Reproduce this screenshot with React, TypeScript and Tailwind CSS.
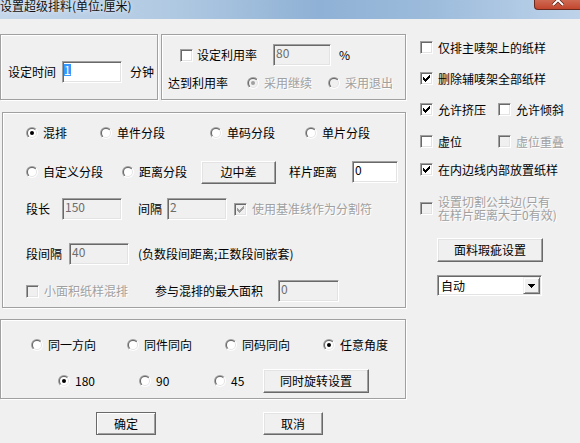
import React from "react";

const DIS = "text-[#a0a0a0] [text-shadow:1px_1px_0_#ffffff]";

function Radio({ checked = false, disabled = false }: { checked?: boolean; disabled?: boolean }) {
  return (
    <svg width="12" height="12" viewBox="0 0 12 12" className="shrink-0 block">
      <defs>
        <linearGradient id="rdo" x1="0" y1="0" x2="1" y2="1">
          <stop offset="0.5" stopColor="#a0a0a0" />
          <stop offset="0.5" stopColor="#ffffff" />
        </linearGradient>
        <linearGradient id="rdi" x1="0" y1="0" x2="1" y2="1">
          <stop offset="0.5" stopColor="#696969" />
          <stop offset="0.5" stopColor="#e3e3e3" />
        </linearGradient>
      </defs>
      <circle cx="6" cy="6" r="6" fill="url(#rdo)" />
      <circle cx="6" cy="6" r="5" fill="url(#rdi)" />
      <circle cx="6" cy="6" r="4" fill={disabled ? "#f0f0f0" : "#ffffff"} />
      {checked && <circle cx="6" cy="6" r="2" fill={disabled ? "#a0a0a0" : "#000000"} />}
    </svg>
  );
}

function Check({ checked = false, disabled = false }: { checked?: boolean; disabled?: boolean }) {
  return (
    <span
      className={`w-[13px] h-[13px] shrink-0 box-border border border-t-[#a0a0a0] border-l-[#a0a0a0] border-b-white border-r-white shadow-[inset_1px_1px_0_#696969,inset_-1px_-1px_0_#e3e3e3] flex items-center justify-center ${
        disabled ? "bg-[#f0f0f0]" : "bg-white"
      }`}
    >
      {checked && (
        <svg width="7" height="7" viewBox="0 0 7 7" className="block">
          <path
            d="M6 0h1v1h-1z M5 1h2v1h-2z M0 2h1v1h-1z M4 2h3v1h-3z M0 3h2v1h-2z M3 3h3v1h-3z M0 4h5v1h-5z M1 5h3v1h-3z M2 6h1v1h-1z"
            fill={disabled ? "#a0a0a0" : "#000000"}
          />
        </svg>
      )}
    </span>
  );
}

function Field({
  value,
  disabled = false,
  selected = false,
  className = "",
}: {
  value: string;
  disabled?: boolean;
  selected?: boolean;
  className?: string;
}) {
  return (
    <div
      className={`h-[22px] shrink-0 box-border border border-t-[#a0a0a0] border-l-[#a0a0a0] border-b-white border-r-white shadow-[inset_1px_1px_0_#696969,inset_-1px_-1px_0_#e3e3e3] flex items-start pt-[1px] pl-[2px] ${
        disabled ? "bg-[#f0f0f0] text-[#6d6d6d]" : "bg-white text-black"
      } ${className}`}
    >
      {selected ? (
        <span className="inline-block ml-[-1px] mt-[1px] h-[12px] leading-[12px] bg-[#3399ff] text-white">{value}</span>
      ) : (
        <span className="leading-[14px]">{value}</span>
      )}
    </div>
  );
}

function Btn({
  children,
  def = false,
  className = "",
}: {
  children: React.ReactNode;
  def?: boolean;
  className?: string;
}) {
  return (
    <div
      className={`shrink-0 box-border flex items-center justify-center bg-[#f0f0f0] border leading-[14px] ${
        def
          ? "border-[#696969] shadow-[inset_1px_1px_0_#ffffff,inset_-1px_-1px_0_#a0a0a0]"
          : "border-t-white border-l-white border-b-[#696969] border-r-[#696969] shadow-[inset_-1px_-1px_0_#a0a0a0,inset_1px_1px_0_#e3e3e3]"
      } ${className}`}
    >
      {children}
    </div>
  );
}

function RadioItem({
  label,
  checked = false,
  disabled = false,
  className = "",
}: {
  label: string;
  checked?: boolean;
  disabled?: boolean;
  className?: string;
}) {
  return (
    <div className={`flex items-center shrink-0 ${className}`}>
      <Radio checked={checked} disabled={disabled} />
      <span className={`ml-[5px] whitespace-nowrap ${disabled ? DIS : ""}`}>{label}</span>
    </div>
  );
}

function CheckItem({
  label,
  checked = false,
  disabled = false,
  className = "",
}: {
  label: string;
  checked?: boolean;
  disabled?: boolean;
  className?: string;
}) {
  return (
    <div className={`flex items-center shrink-0 ${className}`}>
      <Check checked={checked} disabled={disabled} />
      <span className={`ml-[5px] whitespace-nowrap ${disabled ? DIS : ""}`}>{label}</span>
    </div>
  );
}

function Group({ children, className = "" }: { children?: React.ReactNode; className?: string }) {
  return (
    <div
      className={`box-border shrink-0 border border-[#a0a0a0] shadow-[inset_1px_1px_0_#ffffff,1px_1px_0_#ffffff] flex flex-col ${className}`}
    >
      {children}
    </div>
  );
}

export default function App() {
  return (
    <div className="w-[580px] h-[443px] overflow-hidden bg-[#f0f0f0] text-[12px] leading-[14px] text-black font-['Noto_Sans_CJK_SC','Noto_Sans',sans-serif]">
      {/* title bar */}
      <div className="h-[19px] flex items-start overflow-hidden bg-[linear-gradient(90deg,#c4d6ea_0%,#b0c9e2_30%,#8fb1d5_55%,#9dbcdc_75%,#bed3ea_100%)]">
        <span className="mt-[-1px] whitespace-nowrap text-[12px] leading-[13px] text-[#111] [text-shadow:0_0_5px_rgba(255,255,255,0.9)]">
          设置超级排料(单位:厘米)
        </span>
        <div className="ml-auto relative w-[46px] h-[10px] box-border border-l border-b border-[#6b2a1e] rounded-bl-[4px] bg-[linear-gradient(180deg,#cf6a53_0%,#c2462e_100%)]">
          <svg width="14" height="6" viewBox="0 0 14 6" className="absolute left-[16px] top-0">
            <path d="M2 5 L7 0 L12 5" stroke="#5a2015" strokeWidth="3.4" fill="none" />
            <path d="M2 5 L7 0 L12 5" stroke="#ffffff" strokeWidth="2" fill="none" />
          </svg>
        </div>
      </div>

      <div className="flex">
        {/* left column */}
        <div className="w-[407px] shrink-0 flex flex-col">
          <div className="flex mt-[15px]">
            <Group className="w-[158px] h-[66px]">
              <div className="flex items-center mt-[26px] pl-[7px] h-[22px]">
                <span className="w-[48px] whitespace-nowrap">设定时间</span>
                <Field className="ml-[6px] w-[60px]" value="1" selected />
                <span className="ml-[8px] whitespace-nowrap">分钟</span>
              </div>
            </Group>
            <Group className="ml-[3px] w-[245px] h-[66px]">
              <div className="flex items-center mt-[9px] pl-[18px] h-[22px]">
                <Check />
                <span className="ml-[4px] w-[60px] whitespace-nowrap">设定利用率</span>
                <Field className="ml-[16px] w-[58px]" value="80" disabled />
                <span className="ml-[8px]">%</span>
              </div>
              <div className="flex items-center mt-[9px] pl-[6px] h-[16px]">
                <span className="w-[60px] whitespace-nowrap">达到利用率</span>
                <RadioItem className="ml-[19px] w-[80px]" label="采用继续" checked disabled />
                <RadioItem className="ml-[1px]" label="采用退出" disabled />
              </div>
            </Group>
          </div>

          <Group className="mt-[12px] ml-[2px] w-[404px] h-[196px]">
            <div className="flex items-center mt-[12px] pl-[23px] h-[16px]">
              <RadioItem className="w-[74px]" label="混排" checked />
              <RadioItem className="w-[110px]" label="单件分段" />
              <RadioItem className="w-[95px]" label="单码分段" />
              <RadioItem label="单片分段" />
            </div>
            <div className="flex items-center mt-[19px] pl-[23px] h-[24px]">
              <RadioItem className="w-[96px]" label="自定义分段" />
              <RadioItem className="w-[79px]" label="距离分段" />
              <Btn className="w-[75px] h-[23px]">边中差</Btn>
              <span className="ml-[13px] w-[48px] whitespace-nowrap">样片距离</span>
              <Field className="ml-[15px] w-[46px]" value="0" />
            </div>
            <div className="flex items-center mt-[14px] pl-[23px] h-[22px]">
              <span className="w-[36px] whitespace-nowrap">段长</span>
              <Field className="w-[60px]" value="150" disabled />
              <span className="ml-[16px] w-[29px] whitespace-nowrap">间隔</span>
              <Field className="w-[60px]" value="2" disabled />
              <CheckItem className="ml-[7px]" label="使用基准线作为分割符" checked disabled />
            </div>
            <div className="flex items-center mt-[23px] pl-[23px] h-[22px]">
              <span className="w-[43px] whitespace-nowrap">段间隔</span>
              <Field className="w-[60px]" value="40" disabled />
              <span className="ml-[9px] whitespace-nowrap">(负数段间距离;正数段间嵌套)</span>
            </div>
            <div className="flex items-center mt-[15px] pl-[23px] h-[22px]">
              <CheckItem className="w-[129px]" label="小面积纸样混排" disabled />
              <span className="w-[123px] whitespace-nowrap">参与混排的最大面积</span>
              <Field className="w-[61px]" value="0" disabled />
            </div>
          </Group>

          <Group className="mt-[11px] w-[406px] h-[80px]">
            <div className="flex items-center mt-[17px] pl-[30px] h-[16px]">
              <RadioItem className="w-[96px]" label="同一方向" />
              <RadioItem className="w-[98px]" label="同件同向" />
              <RadioItem className="w-[98px]" label="同码同向" />
              <RadioItem label="任意角度" checked />
            </div>
            <div className="flex items-center mt-[16px] pl-[57px] h-[24px]">
              <RadioItem className="w-[81px]" label="180" checked />
              <RadioItem className="w-[75px]" label="90" />
              <RadioItem className="w-[49px]" label="45" />
              <Btn className="w-[106px] h-[24px]">同时旋转设置</Btn>
            </div>
          </Group>

          <div className="flex mt-[13px] pl-[96px]">
            <Btn def className="w-[60px] h-[23px]">确定</Btn>
            <Btn className="ml-[107px] w-[60px] h-[23px]">取消</Btn>
          </div>
        </div>

        {/* right column */}
        <div className="flex flex-col pl-[13px]">
          <CheckItem className="mt-[22px] h-[13px]" label="仅排主唛架上的纸样" />
          <CheckItem className="mt-[18px] h-[13px]" label="删除辅唛架全部纸样" checked />
          <div className="flex items-center mt-[18px] h-[13px]">
            <CheckItem className="w-[78px]" label="允许挤压" checked />
            <CheckItem label="允许倾斜" />
          </div>
          <div className="flex items-center mt-[19px] h-[13px]">
            <CheckItem className="w-[78px]" label="虚位" />
            <CheckItem label="虚位重叠" disabled />
          </div>
          <CheckItem className="mt-[15px] h-[13px]" label="在内边线内部放置纸样" checked />
          <div className="flex items-start mt-[19px] h-[26px]">
            <div className="mt-[7px]">
              <Check disabled />
            </div>
            <div className={`ml-[5px] leading-[13px] whitespace-nowrap ${DIS}`}>
              <div>设置切割公共边(只有</div>
              <div>在样片距离大于0有效)</div>
            </div>
          </div>
          <Btn className="mt-[17px] ml-[17px] w-[106px] h-[24px]">面料瑕疵设置</Btn>
          <div className="mt-[13px] ml-[17px] w-[105px] h-[21px] box-border flex border border-t-[#a0a0a0] border-l-[#a0a0a0] border-b-white border-r-white shadow-[inset_1px_1px_0_#696969,inset_-1px_-1px_0_#e3e3e3] bg-white p-[1px]">
            <span className="flex-1 pl-[2px] leading-[17px] whitespace-nowrap">自动</span>
            <div className="w-[17px] h-[17px] box-border flex items-center justify-center bg-[#f0f0f0] border border-t-[#f0f0f0] border-l-[#f0f0f0] border-b-[#696969] border-r-[#696969] shadow-[inset_1px_1px_0_#ffffff,inset_-1px_-1px_0_#a0a0a0]">
              <svg width="7" height="4" viewBox="0 0 7 4" className="block">
                <path d="M0 0h7v1h-7z M1 1h5v1h-5z M2 2h3v1h-3z M3 3h1v1h-1z" fill="#000" />
              </svg>
            </div>
          </div>
        </div>
      </div>
    </div>
  );
}
